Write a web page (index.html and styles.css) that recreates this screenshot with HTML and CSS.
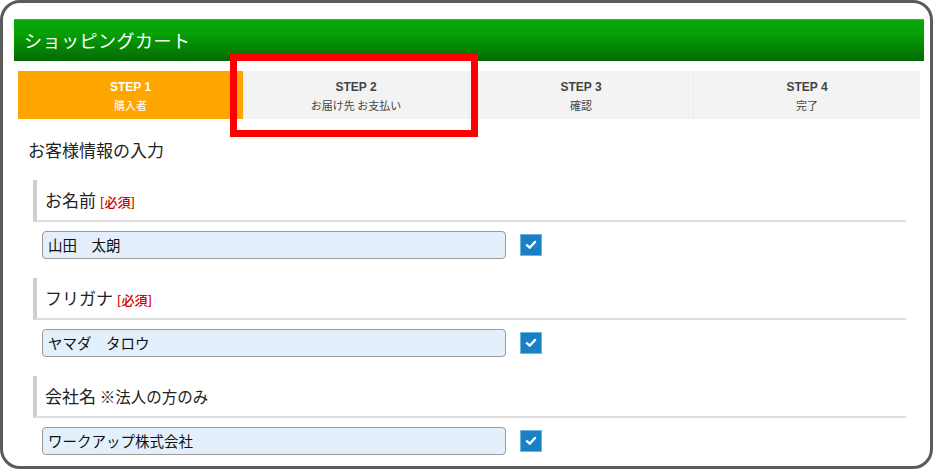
FILE: index.html
```html
<!DOCTYPE html>
<html lang="ja">
<head>
<meta charset="utf-8">
<link rel="stylesheet" href="styles.css">
</head>
<body>
<div class="frame">
  <div class="cart-header">ショッピングカート</div>
  <div class="steps">
    <div class="step active"><div class="step-num">STEP 1</div><div class="step-label">購入者</div></div>
    <div class="step"><div class="step-num">STEP 2</div><div class="step-label">お届け先 お支払い</div></div>
    <div class="step"><div class="step-num">STEP 3</div><div class="step-label">確認</div></div>
    <div class="step"><div class="step-num">STEP 4</div><div class="step-label">完了</div></div>
  </div>
  <div class="highlight"></div>
  <h2 class="page-title">お客様情報の入力</h2>
  <div class="section">
    <div class="sec-head">お名前 <span class="req">[必須]</span></div>
    <div class="row">
      <div class="input">山田　太朗</div>
      <div class="check"><svg viewBox="0 0 22 22" width="22" height="22"><path d="M6.5 11.2 L9.6 14 L15.5 7.6" fill="none" stroke="#fff" stroke-width="2.6" stroke-linecap="round" stroke-linejoin="round"/></svg></div>
    </div>
  </div>
  <div class="section">
    <div class="sec-head">フリガナ <span class="req">[必須]</span></div>
    <div class="row">
      <div class="input">ヤマダ　タロウ</div>
      <div class="check"><svg viewBox="0 0 22 22" width="22" height="22"><path d="M6.5 11.2 L9.6 14 L15.5 7.6" fill="none" stroke="#fff" stroke-width="2.6" stroke-linecap="round" stroke-linejoin="round"/></svg></div>
    </div>
  </div>
  <div class="section">
    <div class="sec-head">会社名 <span class="note">※法人の方のみ</span></div>
    <div class="row">
      <div class="input">ワークアップ株式会社</div>
      <div class="check"><svg viewBox="0 0 22 22" width="22" height="22"><path d="M6.5 11.2 L9.6 14 L15.5 7.6" fill="none" stroke="#fff" stroke-width="2.6" stroke-linecap="round" stroke-linejoin="round"/></svg></div>
    </div>
  </div>
</div>
</body>
</html>
```
FILE: styles.css
```css
html, body {
  margin: 0;
  padding: 0;
  background: #fff;
}
body {
  font-family: "Noto Sans CJK JP", "Liberation Sans", sans-serif;
  color: #222;
}
.frame {
  position: relative;
  box-sizing: border-box;
  width: 933px;
  height: 469px;
  border: 3px solid #5b5b5b;
  border-radius: 20px;
  padding: 16px 0 0 11px;
  overflow: hidden;
}
.cart-header {
  width: 910px;
  height: 42px;
  box-sizing: border-box;
  background: linear-gradient(#0aa80a, #05a005 35%, #046a04);
  border-top: 1px solid #2fbf2f;
  color: #fff;
  font-size: 18px;
  line-height: 40px;
  padding-left: 10px;
  letter-spacing: 0.5px;
}
.steps {
  display: grid;
  grid-template-columns: 225px 225px 225px 227px;
  margin: 10px 0 0 4px;
  width: 902px;
  height: 48px;
}
.step {
  background: #f3f3f3;
  border-left: 1px solid #ececec;
  text-align: center;
  color: #444;
  padding-top: 8px;
  box-sizing: border-box;
}
.step.active {
  background: #ffa500;
  color: #fff;
  border-left: none;
}
.step-num {
  font-family: "Liberation Sans", sans-serif;
  font-weight: bold;
  font-size: 12px;
  line-height: 16px;
}
.step-label {
  font-size: 11px;
  line-height: 20px;
}
.highlight {
  position: absolute;
  left: 227px;
  top: 51px;
  width: 248px;
  height: 83px;
  box-sizing: border-box;
  border: 7px solid #ff0000;
}
.page-title {
  margin: 19px 0 0 14px;
  font-size: 17px;
  font-weight: normal;
  line-height: 24px;
  color: #222;
}
.section {
  margin: 18px 0 0 19px;
  width: 873px;
}
.section + .section {
  margin-top: 19px;
}
.sec-head {
  height: 42px;
  box-sizing: border-box;
  border-left: 4px solid #cfcfcf;
  border-bottom: 2px solid #dedede;
  padding-left: 8px;
  font-size: 17px;
  line-height: 40px;
  color: #222;
}
.req {
  color: #cc0000;
  font-size: 13px;
  font-weight: 500;
}
.note {
  font-size: 15.5px;
  color: #222;
}
.row {
  display: flex;
  align-items: center;
  gap: 14px;
  margin: 9px 0 0 9px;
}
.input {
  width: 464px;
  height: 28px;
  box-sizing: border-box;
  background: #e3f0fb;
  border: 1px solid #9a9a9a;
  border-radius: 4px;
  padding-left: 5px;
  font-size: 14.5px;
  line-height: 26px;
  color: #111;
}
.check {
  width: 22px;
  height: 22px;
  box-sizing: border-box;
  background: #1a7fc6;
  border: 1px solid #6cb4e4;
  display: flex;
  align-items: center;
  justify-content: center;
}
.check svg {
  width: 20px;
  height: 20px;
  display: block;
}
```
